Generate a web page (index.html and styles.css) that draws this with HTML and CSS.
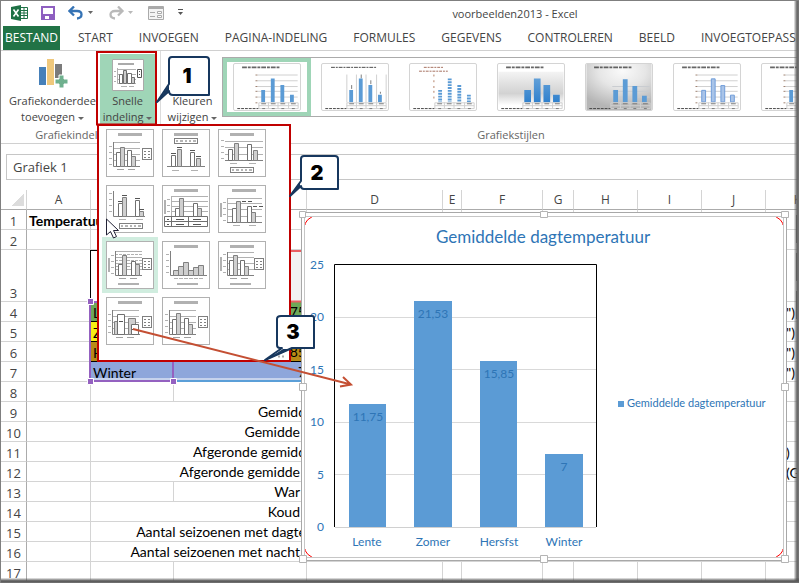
FILE: index.html
```html
<!DOCTYPE html>
<html lang="nl">
<head>
<meta charset="utf-8">
<title>voorbeelden2013 - Excel</title>
<link rel="stylesheet" href="styles.css">
</head>
<body>
<svg class="defs" aria-hidden="true">
  <defs>
    <rect id="title" width="24" height="3" fill="#b1b1b1"/>
    <g id="legend"><rect x=".5" y=".5" width="9" height="11" fill="#fff" stroke="#7f7f7f"/><path d="M2 3.500h2M2 6.500h2M2 9.500h2M6 3.500h2M6 6.500h2M6 9.500h2" stroke="#808080"/></g>
    <g id="key"><rect x=".5" y=".5" width="23" height="5" fill="#fff" stroke="#7f7f7f"/><path d="M2 3h2M6 3h3M11 3h2M15 3h2M19 3h3" stroke="#6a6a6a"/></g>
    <path id="grid" d="M0 .5h27M0 6.500h27M0 12.500h27M0 18.500h27" stroke="#b1b1b1"/>
    <path id="ticks" d="M0 .5h3M0 6.500h3M0 12.500h3M0 18.500h3" stroke="#b1b1b1"/>
    <path id="cats" d="M0 .5h7M11 .5h7" stroke="#a0a0a0"/>
    <rect id="axistitle" x=".5" y=".5" width="1" height="13" fill="#b1b1b1" stroke="#b1b1b1"/>
    <g id="mini-table" fill="none" stroke="#cfcfcf"><path d="M25.500 40.500h41v6h-41zM25.500 43.500h41M35.500 40v7M45.500 40v7M56.500 40v7"/><path d="M3 46.500h22" stroke="#444" stroke-dasharray="3 1"/><path d="M28 41.500h5M38 41.500h5M48 41.500h5M59 41.500h5M29 46.500h3M39 46.500h3M49 46.500h3M60 46.500h3" stroke="#777"/></g>
    <path id="mini-title" d="M8 3.500h40" stroke="#333" stroke-width="2" stroke-dasharray="5 1 3 1" opacity=".75"/>
    <g id="mini-grid"><path d="M24 11.500h42M24 17.500h42M24 23.500h42M24 28.500h42M24 34.500h42" stroke="#cfcfcf"/><path d="M22 11.500h2M22 17.500h2M22 23.500h2M22 28.500h2M22 34.500h2M22 40.500h2" stroke="#9c7d6c"/></g>
    <path id="mini-bars" d="M28 27h4v13h-4zM38 15h4v25h-4zM48 22h4v18h-4zM58 32h4v8h-4z"/>
    <path id="mini-wide" d="M27 27h7v13h-7zM37 15h7v25h-7zM47 22h7v18h-7zM57 32h7v8h-7z"/>
    <linearGradient id="fade" x2="0" y2="1"><stop stop-color="#f4f4f4"/><stop offset=".3" stop-color="#e4e4e4"/><stop offset=".65" stop-color="#d2d2d2"/><stop offset="1" stop-color="#fff"/></linearGradient>
    <radialGradient id="spot" cx=".55" cy=".15" r=".8"><stop stop-color="#fafafa"/><stop offset=".45" stop-color="#e6e6e6"/><stop offset="1" stop-color="#b5b5b5"/></radialGradient>
    <linearGradient id="blue" x2="0" y2="1"><stop stop-color="#62a0d8"/><stop offset="1" stop-color="#2f80cd"/></linearGradient>
  </defs>
</svg>
<div class="app">
  <header class="titlebar">
    <div class="quick">
      <svg width="17" height="16" viewBox="0 0 17 16"><path d="M9.500 2.500h7v11h-7z" fill="#fff" stroke="#1e7145"/><path d="M10 5.500h6M10 8h6M10 10.500h6M13 3v10" stroke="#1e7145"/><path d="M0 2l10-2v16L0 14z" fill="#1e7145"/><path d="M2.500 4.500l5 7M7.500 4.500l-5 7" stroke="#fff" stroke-width="1.600"/></svg>
      <button aria-label="Opslaan"><svg width="14" height="14" viewBox="0 0 14 14"><path d="M1 1h12v12H1z" fill="#fff" stroke="#8e5fc0" stroke-width="2"/><path d="M2 8h10v5H2z" fill="#8e5fc0"/><path d="M4 10h4v3H4z" fill="#fff"/></svg></button>
      <button aria-label="Ongedaan maken"><svg width="27" height="14" viewBox="0 0 27 14"><path d="M6 .5L1.500 5 6 9.500M2 5h7c6 0 6 7 0 7.500" fill="none" stroke="#3573b5" stroke-width="2.300"/><path d="M20 5h5l-2.500 3z" fill="#666"/></svg></button>
      <button aria-label="Opnieuw"><svg width="27" height="14" viewBox="0 0 27 14"><path d="M10 .5L14.500 5 10 9.500M14 5H7C1 5 1 12 7 12.500" fill="none" stroke="#b9b9b9" stroke-width="2.300"/><path d="M20 5h5l-2.500 3z" fill="#b9b9b9"/></svg></button>
      <button aria-label="Formulier"><svg width="16" height="14" viewBox="0 0 16 14"><path d="M.5.5h15v13H.5z" fill="#f4f4f4" stroke="#aaa"/><path d="M1 2h14" stroke="#aaa" stroke-width="2"/><path d="M2 6.500h5M2 10.500h5" stroke="#aaa"/><path d="M9.500 5.500h4v2h-4zM9.500 9.500h4v2h-4z" fill="#fff" stroke="#aaa"/></svg></button>
      <button aria-label="Werkbalk aanpassen"><svg width="7" height="7" viewBox="0 0 7 7"><path d="M1 .5h5" stroke="#555"/><path d="M1 3h5L3.500 6z" fill="#555"/></svg></button>
    </div>
    <h1>voorbeelden2013 - Excel</h1>
  </header>
  <nav class="tabs">
    <button class="file">BESTAND</button><button>START</button><button>INVOEGEN</button><button>PAGINA-INDELING</button><button>FORMULES</button><button>GEGEVENS</button><button>CONTROLEREN</button><button>BEELD</button><button>INVOEGTOEPASSINGEN</button>
  </nav>
  <section class="ribbon">
    <div class="group layouts">
      <div class="tools">
        <button class="tool elements">
          <svg width="30" height="30" viewBox="0 0 30 30"><path d="M1 8h7v18H1z" fill="#4680b9"/><path d="M9 0h7v26H9z" fill="#efc87c"/><path d="M17 5h7v14h-7z" fill="#7b7b7b"/><path d="M21 16h5v4h4v5h-4v4h-5v-4h-4v-5h4z" fill="#6fb08e" stroke="#fff"/></svg>
          <span>Grafiekonderdee<br>toevoegen <i></i></span>
        </button>
        <button class="tool active">
          <svg width="32" height="32" viewBox="0 0 32 32"><path d="M.5.5h31v31H.5z" fill="#fff" stroke="#aaa"/><path d="M6 5h16" stroke="#aaa" stroke-width="2"/><path d="M5.500 9v15.500H24M6 10.500h18M6 15.500h18M6 20.500h18M2 12.500h2M2 17.500h2M2 22.500h2M9 27.500h6M17 27.500h5" fill="none" stroke="#b1b1b1"/><path d="M7.500 15.500h3v9h-3zM15.500 14.500h4v10h-4z" fill="#fff" stroke="#707070"/><path d="M11.500 11.500h3v13h-3zM19.500 18.500h3v6h-3z" fill="#ccc" stroke="#707070"/><path d="M25.500 10.500h4v8h-4z" fill="#fff" stroke="#555"/><path d="M27 12.500h1M27 15.500h1" stroke="#555"/></svg>
          <span>Snelle<br>indeling <i></i></span>
        </button>
      </div>
      <p>Grafiekindelingen</p>
    </div>
    <div class="group styles">
      <div class="tools">
        <button class="tool colours"><span>Kleuren<br>wijzigen <i></i></span></button>
        <div class="style-strip">
          <button class="chosen" aria-label="Stijl 1"><svg viewBox="0 0 68 48"><use href="#mini-title"/><use href="#mini-grid"/><use href="#mini-bars" fill="#5b9bd5"/><use href="#mini-table"/></svg></button>
          <button aria-label="Stijl 2"><svg viewBox="0 0 68 48"><path d="M9 3.500h48" stroke="#444" stroke-dasharray="4 1 2 1"/><path d="M25.500 11v29M35.500 11v29M45.500 11v29M56.500 11v29M66.500 11v29" stroke="#cfcfcf"/><path d="M30.500 22v4M40.500 11v4M50.500 17v4M60.500 29v2" stroke="#777"/><use href="#mini-bars" fill="#5b9bd5"/><use href="#mini-table"/></svg></button>
          <button aria-label="Stijl 3"><svg viewBox="0 0 68 48"><path d="M14 3.500h20M9 7.500h30" stroke="#a36c5b" stroke-dasharray="3 1 2 1"/><path d="M24.500 11v2M24.500 17v2M24.500 23v2M24.500 28v2M24.500 34v2" stroke="#b07a60"/><path d="M31 27v13M41 15v25M51 22v18M61 32v8" stroke="#5b9bd5" stroke-width="4" stroke-dasharray="2 1"/><use href="#mini-table"/></svg></button>
          <button aria-label="Stijl 4"><svg viewBox="0 0 68 48"><path d="M0 8h68v35H0z" fill="url(#fade)"/><use href="#mini-title"/><use href="#mini-wide" fill="url(#blue)"/><use href="#mini-table"/></svg></button>
          <button aria-label="Stijl 5"><svg viewBox="0 0 68 48"><path d="M0 0h68v48H0z" fill="url(#spot)"/><use href="#mini-title"/><path d="M27 23.500h39M27 28.500h39M27 34.500h39" stroke="#c8ccd0"/><path d="M28 27h5v13h-5zM38 16h5v24h-5zM48 23h5v17h-5zM58 33h5v7h-5z" fill="#5b9bd5"/><use href="#mini-table"/></svg></button>
          <button aria-label="Stijl 6"><svg viewBox="0 0 68 48"><use href="#mini-title"/><use href="#mini-grid"/><path d="M28.500 27.500h4v12h-4zM38.500 15.500h4v24h-4zM48.500 22.500h4v17h-4zM58.500 32.500h4v7h-4z" fill="#a9c4e8" stroke="#6d9bd8"/><use href="#mini-table"/></svg></button>
          <button aria-label="Stijl 7"><svg viewBox="0 0 68 48"><use href="#mini-title"/><use href="#mini-grid"/><use href="#mini-bars" fill="#5b9bd5"/><use href="#mini-table"/></svg></button>
        </div>
      </div>
      <p>Grafiekstijlen</p>
    </div>
  </section>
  <div class="formula-row">
    <label class="name-box"><input aria-label="Naamvak" value="Grafiek 1"><i></i></label>
    <input class="formula" aria-label="Formulebalk">
  </div>
  <main class="sheet">
    <table>
      <colgroup><col class="c-head"><col class="c-a"><col class="c-b"><col class="c-c"><col class="c-d"><col class="c-e"><col class="c-f"><col class="c-g"><col class="c-a"><col class="c-a"><col class="c-a"><col class="c-a"></colgroup>
      <thead><tr><th class="corner"></th><th>A</th><th>B</th><th>C</th><th>D</th><th>E</th><th>F</th><th>G</th><th>H</th><th>I</th><th>J</th><th>K</th></tr></thead>
      <tbody>
        <tr><th>1</th><td class="bold">Temperatuur</td><td></td><td></td><td></td><td></td><td></td><td></td><td></td><td></td><td></td><td></td></tr>
        <tr><th>2</th><td></td><td></td><td></td><td></td><td></td><td></td><td></td><td></td><td></td><td></td><td></td></tr>
        <tr class="tall"><th>3</th><td class="edge"></td><td class="boxed"></td><td class="head-cell"></td><td></td><td></td><td></td><td></td><td></td><td></td><td></td><td></td></tr>
        <tr><th>4</th><td></td><td class="lente">Lente</td><td class="lente num">11,75</td><td></td><td></td><td></td><td></td><td></td><td></td><td></td><td class="tail">")</td></tr>
        <tr><th>5</th><td></td><td class="zomer">Zomer</td><td class="zomer num">21,53</td><td></td><td></td><td></td><td></td><td></td><td></td><td></td><td class="tail">")</td></tr>
        <tr><th>6</th><td></td><td class="herfst">Herfst</td><td class="herfst num">15,85</td><td></td><td></td><td></td><td></td><td></td><td></td><td></td><td class="tail">")</td></tr>
        <tr><th>7</th><td></td><td class="winter">Winter</td><td class="winter num">7</td><td></td><td></td><td></td><td></td><td></td><td></td><td></td><td class="tail">")</td></tr>
        <tr><th>8</th><td></td><td></td><td></td><td></td><td></td><td></td><td></td><td></td><td></td><td></td><td></td></tr>
        <tr><th>9</th><td></td><td colspan="2" class="num">Gemidd</td><td></td><td></td><td></td><td></td><td></td><td></td><td></td><td></td></tr>
        <tr><th>10</th><td></td><td colspan="2" class="num short">Gemidde</td><td></td><td></td><td></td><td></td><td></td><td></td><td></td><td></td></tr>
        <tr><th>11</th><td></td><td colspan="2" class="num">Afgeronde gemidd</td><td></td><td></td><td></td><td></td><td></td><td></td><td></td><td class="tail">)</td></tr>
        <tr><th>12</th><td></td><td colspan="2" class="num short">Afgeronde gemidde</td><td></td><td></td><td></td><td></td><td></td><td></td><td></td><td class="tail">(G</td></tr>
        <tr><th>13</th><td></td><td></td><td class="num short">War</td><td></td><td></td><td></td><td></td><td></td><td></td><td></td><td></td></tr>
        <tr><th>14</th><td></td><td colspan="2" class="num short">Koud</td><td></td><td></td><td></td><td></td><td></td><td></td><td></td><td></td></tr>
        <tr><th>15</th><td></td><td colspan="2" class="num">Aantal seizoenen met dagte</td><td></td><td></td><td></td><td></td><td></td><td></td><td></td><td></td></tr>
        <tr><th>16</th><td></td><td colspan="2" class="num short">Aantal seizoenen met nacht</td><td></td><td></td><td></td><td></td><td></td><td></td><td></td><td></td></tr>
        <tr><th>17</th><td></td><td></td><td></td><td></td><td></td><td></td><td></td><td></td><td></td><td></td><td></td></tr>
      </tbody>
    </table>
    <svg class="selection" width="220" height="90" viewBox="86 297 220 90">
      <path d="M177 301.500h129" stroke="#ea5f63" stroke-width="2"/>
      <path d="M90 302h83v79H90z" fill="none" stroke="#9461c0" stroke-width="2"/>
      <path d="M92 379h214" stroke="#fff"/>
      <path d="M177 381h129" stroke="#5b9fd8" stroke-width="2"/>
      <path d="M87.500 298.500h6v6h-6zM87.500 378.500h6v6h-6zM170.500 378.500h6v6h-6z" fill="#9461c0" stroke="#fff"/>
    </svg>
    <svg class="chart" width="490" height="354" viewBox="299 210 490 354" role="img" aria-label="Gemiddelde dagtemperatuur">
      <path d="M301.500 212.500h485v348h-485z" fill="#fff" stroke="#a8a8a8"/>
      <rect x="304.500" y="216.500" width="479" height="341" rx="11" fill="none" stroke="#f00"/>
      <path d="M304.500 216.500h479v341h-479z" fill="none" stroke="#c6c6c6"/>
      <path d="M312 217h464M312 557h464M305 225v324M783 225v324" stroke="#fff" stroke-width="2"/>
      <path d="M304.500 216.500h479v341h-479z" fill="none" stroke="#c6c6c6"/>
      <text class="chart-title" x="543" y="243">Gemiddelde dagtemperatuur</text>
      <path d="M335 317.500h261M335 369.500h261M335 422.500h261M335 474.500h261" stroke="#d9d9d9"/>
      <path d="M334.500 527v-262.500h262V527" fill="none" stroke="#000"/>
      <path d="M335 527.500h261" stroke="#d0d0d0"/>
      <path d="M349 404h37v123h-37zM414 301h38v226h-38zM480 361h37v166h-37zM545 454h38v73h-38z" fill="#5b9bd5"/>
      <g class="y-labels"><text x="324" y="269">25</text><text x="324" y="321">20</text><text x="324" y="374">15</text><text x="324" y="426">10</text><text x="324" y="479">5</text><text x="324" y="531">0</text></g>
      <g class="labels"><text x="368" y="421">11,75</text><text x="433" y="318">21,53</text><text x="499" y="378">15,85</text><text x="564" y="471">7</text></g>
      <g class="labels"><text x="367" y="546">Lente</text><text x="433" y="546">Zomer</text><text x="499" y="546">Hersfst</text><text x="564" y="546">Winter</text></g>
      <path d="M618 401h6v6h-6z" fill="#5b9bd5"/><text class="legend-text" x="627" y="407">Gemiddelde dagtemperatuur</text>
      <path d="M299.500 211.500h6v6h-6zM540.500 211.500h7v6h-7zM781.500 211.500h7v6h-7zM299.500 383.500h7v7h-7zM781.500 383.500h7v7h-7zM299.500 555.500h7v7h-7zM540.500 555.500h7v7h-7zM781.500 555.500h7v7h-7z" fill="#fff" stroke="#b4b4b4"/>
    </svg>
    <div class="chart-buttons"><button aria-label="Grafiekelementen"></button><button aria-label="Stijlen"></button><button aria-label="Filters"></button></div>
  </main>

  <div class="menu">
    <button aria-label="Indeling 1"><svg viewBox="0 0 48 48"><use href="#title" x="12" y="4"/><use href="#grid" x="7" y="13"/><use href="#ticks" x="3" y="17"/><path class="ax" d="M7.500 13v24.500H34"/><path class="w" d="M10.500 23.500h4v14h-4zM21.500 21.500h4v16h-4z"/><path class="g" d="M14.500 18.500h4v19h-4zM25.500 27.500h4v10h-4z"/><use href="#cats" x="11" y="40"/><use href="#legend" x="36" y="19"/></svg></button>
    <button aria-label="Indeling 2"><svg viewBox="0 0 48 48"><use href="#title" x="12" y="4"/><use href="#key" x="12" y="9"/><path class="ax" d="M5 37.500h38"/><path class="w" d="M9.500 26.500h4v11h-4zM28.500 23.500h4v14h-4z"/><path class="g" d="M15.500 20.500h4v17h-4zM34.500 29.500h4v8h-4z"/><path class="d" d="M9 24.500h5M15 18.500h5M28 21.500h5M34 27.500h5"/><path class="l" d="M10 41.500h7M29 41.500h7"/></svg></button>
    <button aria-label="Indeling 3"><svg viewBox="0 0 48 48"><use href="#title" x="12" y="4"/><path class="l" d="M7 12.500h38M7 18.500h38M7 25.500h38"/><use href="#ticks" x="3" y="11"/><path class="ax" d="M7 31.500h38"/><path class="w" d="M10.500 20.500h4v11h-4zM29.500 15.500h4v16h-4z"/><path class="g" d="M16.500 14.500h4v17h-4zM35.500 21.500h4v10h-4z"/><path class="l" d="M12 34.500h7M31 34.500h7"/><use href="#key" x="12" y="38"/></svg></button>
    <button aria-label="Indeling 4"><svg viewBox="0 0 48 48"><use href="#ticks" x="3" y="8"/><path class="ax" d="M7.500 6v25.500H39"/><path class="w" d="M12.500 18.500h4v13h-4zM29.500 15.500h4v16h-4z"/><path class="g" d="M16.500 12.500h4v19h-4zM33.500 26.500h4v5h-4z"/><path class="d" d="M12 16.500h4M16 10.500h5M29 13.500h5M33 24.500h5"/><path class="l" d="M13 34.500h7M30 34.500h7"/><use href="#key" x="13" y="38"/></svg></button>
    <button aria-label="Indeling 5"><svg viewBox="0 0 48 48"><use href="#title" x="12" y="4"/><use href="#axistitle" x="2" y="15"/><use href="#ticks" x="5" y="14"/><path class="l" d="M9.500 11v20M9 11.500h37M9 16.500h37M9 21.500h37M9 26.500h37"/><path class="w" d="M13.500 23.500h4v8h-4zM31.500 18.500h4v13h-4z"/><path class="g" d="M17.500 13.500h4v18h-4zM35.500 23.500h4v8h-4z"/><path class="w" d="M2.500 31.500h43v10h-43zM2 36.500h43M9.500 31v10M26.500 31v10"/><path class="d" d="M5 34.500h2M5 39.500h2M14 34.500h8M14 39.500h8M31 34.500h8M31 39.500h8"/></svg></button>
    <button aria-label="Indeling 6"><svg viewBox="0 0 48 48"><use href="#title" x="14" y="4"/><use href="#axistitle" x="2" y="18"/><use href="#ticks" x="5" y="17"/><path class="l" d="M9.500 13v24M9 13.500h35M9 18.500h35M9 24.500h35M9 31.500h35"/><path class="ax" d="M9 37.500h35"/><path class="w" d="M14.500 23.500h4v14h-4zM29.500 21.500h4v16h-4z"/><path class="g" d="M18.500 16.500h4v21h-4zM33.500 27.500h4v10h-4z"/><path class="d" d="M24 16.500h4M30 16.500h4M35 21.500h4M41 21.500h4"/><path class="l" d="M15 40.500h7M31 40.500h7"/></svg></button>
    <button class="chosen" aria-label="Indeling 7"><svg viewBox="0 0 48 48"><use href="#axistitle" x="2" y="17"/><use href="#ticks" x="5" y="14"/><path class="l" d="M9 10.500h27M9 16.500h27M9 22.500h27M9 28.500h27"/><path class="l" stroke-dasharray="3 1" d="M9 13.500h27M9 19.500h27M9 25.500h27"/><path class="ax" d="M9.500 10v24.500H36"/><path class="w" d="M12.500 23.500h4v11h-4zM25.500 20.500h4v14h-4z"/><path class="g" d="M16.500 14.500h4v20h-4zM29.500 23.500h4v11h-4z"/><use href="#cats" x="13" y="37"/><path class="l b" d="M12 43h21"/><use href="#legend" x="36" y="17"/></svg></button>
    <button aria-label="Indeling 8"><svg viewBox="0 0 48 48"><use href="#title" x="12" y="4"/><use href="#ticks" x="4" y="13"/><path class="ax" d="M8.500 10v24.500H45"/><path class="g" d="M11.500 29.500h5v5h-5zM16.500 25.500h5v9h-5zM21.500 21.500h5v13h-5zM26.500 29.500h5v5h-5zM31.500 26.500h5v8h-5zM36.500 24.500h5v10h-5z"/><path class="l" stroke-dasharray="4 1" d="M12 37.500h29"/><path class="l b" d="M15 43h21"/></svg></button>
    <button aria-label="Indeling 9"><svg viewBox="0 0 48 48"><use href="#title" x="12" y="4"/><use href="#axistitle" x="2" y="16"/><use href="#ticks" x="5" y="13"/><path class="l" d="M9 11.500h27M9 16.500h27M9 22.500h27M9 28.500h27"/><path class="ax" d="M9.500 11v23.500H36"/><path class="w" d="M11.500 19.500h4v15h-4zM22.500 19.500h4v15h-4z"/><path class="g" d="M15.500 14.500h4v20h-4zM26.500 25.500h4v9h-4z"/><use href="#cats" x="12" y="37"/><path class="l b" d="M12 43h21"/><use href="#legend" x="36" y="17"/></svg></button>
    <button aria-label="Indeling 10"><svg viewBox="0 0 48 48"><use href="#title" x="12" y="4"/><use href="#grid" x="6" y="13"/><use href="#ticks" x="2" y="17"/><path class="ax" d="M6.500 13v24.500H34"/><path class="g" d="M8.500 24.500h4v13h-4zM22.500 21.500h7v16h-7z"/><path class="w" d="M11.500 17.500h7v20h-7zM25.500 27.500h7v10h-7z"/><path class="d" d="M13 24.500h4M26 32.500h5"/><use href="#cats" x="10" y="40"/><use href="#legend" x="36" y="19"/></svg></button>
    <button aria-label="Indeling 11"><svg viewBox="0 0 48 48"><use href="#title" x="12" y="4"/><use href="#grid" x="7" y="13"/><use href="#ticks" x="3" y="17"/><path class="ax" d="M7.500 13v24.500H34"/><path class="w" d="M10.500 22.500h4v15h-4zM22.500 21.500h4v16h-4z"/><path class="g" d="M14.500 16.500h4v21h-4zM26.500 27.500h4v10h-4z"/><use href="#cats" x="11" y="40"/><use href="#legend" x="36" y="19"/></svg></button>
  </div>

  <svg class="notes" width="799" height="583" viewBox="0 0 799 583">
    <path d="M97 52h59v72.500H97z" fill="none" stroke="#c00000" stroke-width="2"/>
    <path d="M278 356.500h2M282 356.500h2" stroke="#aaa" stroke-width="2"/>
    <g fill="#fff" stroke="#17375e" stroke-width="2" stroke-linejoin="round">
      <path d="M172 57h34q3 0 3 3v35h-36q-4 0-4-4l-12 11 12-18V60q0-3 3-3z"/>
      <path d="M304 156h31q3 0 3 3v30h-34q-3 0-3-3l-11 10 11-15v-22q0-3 3-3z"/>
      <path d="M281 316h31q2 0 2 2v30h-22l-27 12 17-12h-2q-3 0-3-3v-26q0-3 4-3z"/>
    </g>
    <path d="M158 101l11-16v7zM290 195l10-13v5zM266 360l17-11h8z" fill="#17375e"/>
    <g class="note-numbers"><text x="187" y="83">1</text><text x="317" y="180">2</text><text x="293" y="339">3</text></g>
    <path d="M133 329l218 55.500M343 377l8 7.500-11 2" fill="none" stroke="#c44f33" stroke-width="2"/>
    <path d="M106.500 219v16l4-3.500 3 6.500 3-1.500-3-6h5z" fill="#fff" stroke="#222236"/>
  </svg>
</div>
</body>
</html>
```

FILE: styles.css
```css
* { box-sizing: border-box; }
body { margin: 0; overflow: hidden; background: #fff; color: #444; font: 12px/16px "Open Sans", sans-serif; }
button { border: 0; padding: 0; background: none; color: inherit; font: inherit; white-space: nowrap; }
input { border: 0; padding: 0; background: none; color: inherit; font: inherit; min-width: 0; }
h1, p { margin: 0; font-size: 11px; font-weight: 400; }
svg { display: block; }
.defs { position: absolute; width: 0; height: 0; }

.app { position: relative; display: flex; flex-direction: column; height: 100vh; overflow: hidden; border-top: 1px solid #7f7f7f; border-left: 1px solid #7f7f7f; }
.app::before { content: ""; position: absolute; z-index: 5; top: 0; right: 0; bottom: 0; width: 5px; background: linear-gradient(90deg, #0001, #666 60%, #777); }
.app::after { content: ""; position: absolute; z-index: 5; left: 0; right: 0; bottom: 0; height: 5px; background: linear-gradient(#0001, #555 60%, #777); }

.titlebar { display: grid; grid-template-columns: 230px 1fr; align-items: center; flex: 0 0 25px; }
.quick { display: flex; align-items: center; gap: 13px; padding-left: 10px; padding-bottom: 2px; }
.titlebar h1 { text-align: center; color: #444; }

.tabs { display: flex; flex: 0 0 25px; padding-left: 2px; border-bottom: 1px solid #d0d0d0; overflow: hidden; }
.tabs button { padding: 0 13px; flex: none; }
.tabs .file { width: 57px; padding: 0; margin-right: 5px; background: #217346; color: #fff; }

.ribbon { display: flex; flex: 0 0 93px; border-bottom: 1px solid #d0d0d0; overflow: hidden; font-size: 11px; }
.group { display: flex; flex-direction: column; padding-top: 3px; }
.group p { text-align: center; color: #666; padding-top: 2px; }
.layouts { flex: 0 0 160px; border-right: 1px solid #dcdcdc; }
.styles { flex: 1; min-width: 0; }
.styles p { padding-left: 62px; }
.layouts .tools { padding-left: 4px; }
.tools { display: flex; height: 71px; }
.tool { display: flex; flex-direction: column; align-items: center; justify-content: flex-end; gap: 2px; }
.tool i, .name-box i { display: inline-block; width: 0; border: 3px solid transparent; border-top-color: #666; border-bottom: 0; vertical-align: middle; }
.elements { width: 95px; gap: 4px; }
.active { width: 55px; background: #9fd5b7; }
.colours { flex: 0 0 61px; padding-left: 2px; }
.style-strip { display: flex; flex: 1; min-width: 0; margin-top: 3px; height: 60px; border: 1px solid #ababab; border-right: 0; overflow: hidden; }
.style-strip button { flex: 0 0 88px; display: grid; place-items: center; border: 4px solid transparent; }
.style-strip .chosen { border-color: #9fd5b7; }
.style-strip svg { width: 68px; height: 48px; border: 1px solid #d4d4d4; border-radius: 2px; }

.formula-row { display: flex; flex: 0 0 46px; padding: 10px 0 10px 5px; gap: 12px; }
.name-box { display: flex; align-items: center; width: 110px; padding: 0 10px 0 6px; border: 1px solid #c6c6c6; font-size: 13px; }
.name-box input { width: 84px; }
.formula { flex: 1; border: 1px solid #c6c6c6; border-right: 0; }

.sheet { position: relative; flex: 1; min-height: 0; overflow: hidden; }
table { table-layout: fixed; width: 829px; border-collapse: separate; border-spacing: 0; }
.c-head { width: 26px; } .c-a { width: 64px; } .c-b { width: 83px; } .c-c { width: 133px; } .c-d { width: 136px; } .c-e { width: 19px; } .c-f { width: 81px; } .c-g { width: 31px; }
th, td { height: 20px; padding: 0; border-right: 1px solid #d4d4d4; border-bottom: 1px solid #d4d4d4; white-space: nowrap; }
th { font-weight: 400; line-height: 16px; }
thead th { border-bottom-color: #ababab; }
tbody th { border-right-color: #ababab; font-size: 13px; vertical-align: bottom; }
.corner { background: linear-gradient(135deg, transparent 50%, #dcdcdc 50%) 10px 3px / 13px 13px no-repeat; }
td { color: #000; font: 14px/16px Lato, sans-serif; padding: 0 2px; vertical-align: bottom; }
.bold { font-weight: 700; }
.tall td, .tall th { height: 52px; }
.num { text-align: right; padding: 0 0 1px; }
.short { padding-right: 6px; }
.tail { padding-left: 20px; }
.edge { border-right-color: #000; }
.boxed { border-top: 1px solid #000; }
.head-cell { background: #f2f2f2; border-top: 2px solid #ea5f63; }
.lente { background: #6fa858; border-bottom-color: #000; }
.zomer { background: #f7f013; border-bottom-color: #000; }
.herfst { background: #b88a16; border-bottom-color: #000; }
.winter { background: #8ea6db; border-right-color: #8ea6db; }

.selection { position: absolute; left: 85px; top: 107px; }
.chart { position: absolute; left: 298px; top: 20px; font-family: Lato, sans-serif; fill: #2e75b6; }
.chart text { fill: #2e75b6; }
.chart-title { font-size: 17px; text-anchor: middle; }
.y-labels { font-size: 12px; text-anchor: end; }
.labels { font-size: 12px; text-anchor: middle; }
.legend-text { font-size: 11px; }
.chart-buttons { position: absolute; left: 795px; top: 25px; display: grid; gap: 10px; }
.chart-buttons button { width: 28px; height: 28px; border: 1px solid #333; }

.menu { position: absolute; left: 96px; top: 123px; display: grid; grid-template-columns: repeat(3, 48px); grid-auto-rows: 48px; align-content: start; gap: 8px; width: 194px; height: 238px; padding: 3px 7px; background: #fff; border: 2px solid #c00000; }
.menu button { border: 1px solid #b1b1b1; background: #fff; }
.menu svg { width: 48px; height: 48px; margin: -1px; fill: none; }
.menu .chosen { outline: 4px solid #d0eddf; }
.ax { stroke: #808080; fill: none; }
.w { fill: #fff; stroke: #707070; }
.g { fill: #cfcfcf; stroke: #808080; }
.d { stroke: #555; }
.l { stroke: #b1b1b1; }
.b { stroke-width: 2px; }

.notes { position: absolute; left: -1px; top: -1px; pointer-events: none; }
.note-numbers { font: 900 20px Inter, sans-serif; fill: #000; text-anchor: middle; }
```
